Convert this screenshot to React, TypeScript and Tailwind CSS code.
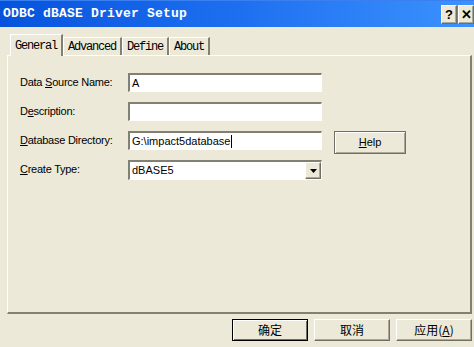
import React from "react";

const sunken =
  "border-t-[2px] border-l-[2px] border-b border-r border-t-[#828073] border-l-[#828073] border-b-white border-r-white bg-white";

const raised =
  "border border-t-white border-l-white border-b-[#716f64] border-r-[#716f64] shadow-[inset_-1px_-1px_0_#aca899] bg-[#ece9d8]";

interface FieldRowProps {
  label: React.ReactNode;
  children: React.ReactNode;
}

const FieldRow: React.FC<FieldRowProps> = ({ label, children }) => (
  <div className="flex items-start h-[19px]">
    <div className="w-[108px] h-[19px] flex items-center text-[11px] tracking-[-0.25px] text-black">
      {label}
    </div>
    {children}
  </div>
);

const App: React.FC = () => {
  const tabs = ["Advanced", "Define", "About"];

  return (
    <div
      className="w-[474px] h-[347px] overflow-hidden bg-[#ece9d8] flex flex-col"
      style={{ fontFamily: '"Liberation Sans", Arial, sans-serif' }}
    >
      {/* Title bar */}
      <div className="h-[27px] flex items-center justify-between bg-gradient-to-r from-[#0553dc] via-[#1e6ff0] to-[#3c92fd] border-t border-[#3a80f0]">
        <span
          className="pl-[3px] text-white font-bold text-[13px] tracking-[0.2px]"
          style={{ fontFamily: '"Liberation Mono", "Courier New", monospace' }}
        >
          ODBC dBASE Driver Setup
        </span>
        <div className="flex items-center gap-[1px] pt-[1px]">
          <div className={`${raised} w-[16px] h-[19px] flex items-center justify-center text-[13px] font-bold text-black`}>
            ?
          </div>
          <div className={`${raised} w-[16px] h-[19px] flex items-center justify-center text-[13px] font-bold text-black`}>
            ✕
          </div>
        </div>
      </div>

      {/* Tabs */}
      <div
        className="mt-[7px] ml-[10px] flex items-end h-[21px] text-[12px] text-black relative z-10"
        style={{ fontFamily: '"Liberation Mono", "Courier New", monospace' }}
      >
        <div className="h-[22px] w-[53px] border-t border-l border-white border-r-2 border-r-[#828073] bg-[#ece9d8] flex items-center justify-center tracking-[-1.2px] -mb-[1px]">
          General
        </div>
        {tabs.map((t) => (
          <div
            key={t}
            className="h-[18px] px-[4px] border-t border-l border-white border-r-2 border-r-[#828073] flex items-center tracking-[-1.2px]"
          >
            {t}
          </div>
        ))}
      </div>

      {/* Panel */}
      <div className="ml-[7px] w-[465px] h-[259px] border-t border-l border-white border-b-2 border-r-2 border-b-[#828073] border-r-[#828073] pt-[17px] pl-[12px] flex flex-col gap-[10px]">
        <FieldRow
          label={
            <span>
              Data <u>S</u>ource Name:
            </span>
          }
        >
          <div className={`${sunken} w-[194px] h-[19px] flex items-center pl-[2px] text-[11px]`}>A</div>
        </FieldRow>
        <FieldRow
          label={
            <span>
              D<u>e</u>scription:
            </span>
          }
        >
          <div className={`${sunken} w-[194px] h-[19px]`} />
        </FieldRow>
        <FieldRow
          label={
            <span>
              <u>D</u>atabase Directory:
            </span>
          }
        >
          <div className={`${sunken} w-[194px] h-[19px] flex items-center pl-[2px] text-[11px]`}>
            G:\impact5database
            <span className="inline-block w-[1px] h-[13px] bg-black ml-[1px]" />
          </div>
          <div className="ml-[12px] shrink-0 w-[72px] h-[23px] border border-[#716f64] bg-[#ece9d8] shadow-[inset_1px_1px_0_#fff,inset_-1px_-1px_0_#aca899] flex items-center justify-center text-[11px]">
            <span>
              <u>H</u>elp
            </span>
          </div>
        </FieldRow>
        <FieldRow
          label={
            <span>
              <u>C</u>reate Type:
            </span>
          }
        >
          <div className={`${sunken} w-[194px] h-[20px] flex items-center justify-between text-[11px]`}>
            <span className="pl-[2px]">dBASE5</span>
            <div className={`${raised} w-[16px] h-full flex items-center justify-center`}>
              <svg width="7" height="4" viewBox="0 0 7 4">
                <path d="M0 0h7L3.5 4z" fill="#000" />
              </svg>
            </div>
          </div>
        </FieldRow>
      </div>

      {/* Bottom buttons */}
      <div
        className="mt-[5px] flex justify-end gap-[6px] pr-[2px] text-[12px] text-black"
        style={{ fontFamily: '"Noto Sans CJK SC", "Liberation Sans", sans-serif' }}
      >
        <div className="w-[76px] h-[22px] border border-black bg-[#ece9d8] shadow-[inset_1px_1px_0_#fff,inset_-1px_-1px_0_#716f64] flex items-center justify-center">
          确定
        </div>
        <div className={`${raised} w-[76px] h-[22px] flex items-center justify-center`}>取消</div>
        <div className={`${raised} w-[76px] h-[22px] flex items-center justify-center`}>
          应用(<u>A</u>)
        </div>
      </div>
    </div>
  );
};

export default App;
